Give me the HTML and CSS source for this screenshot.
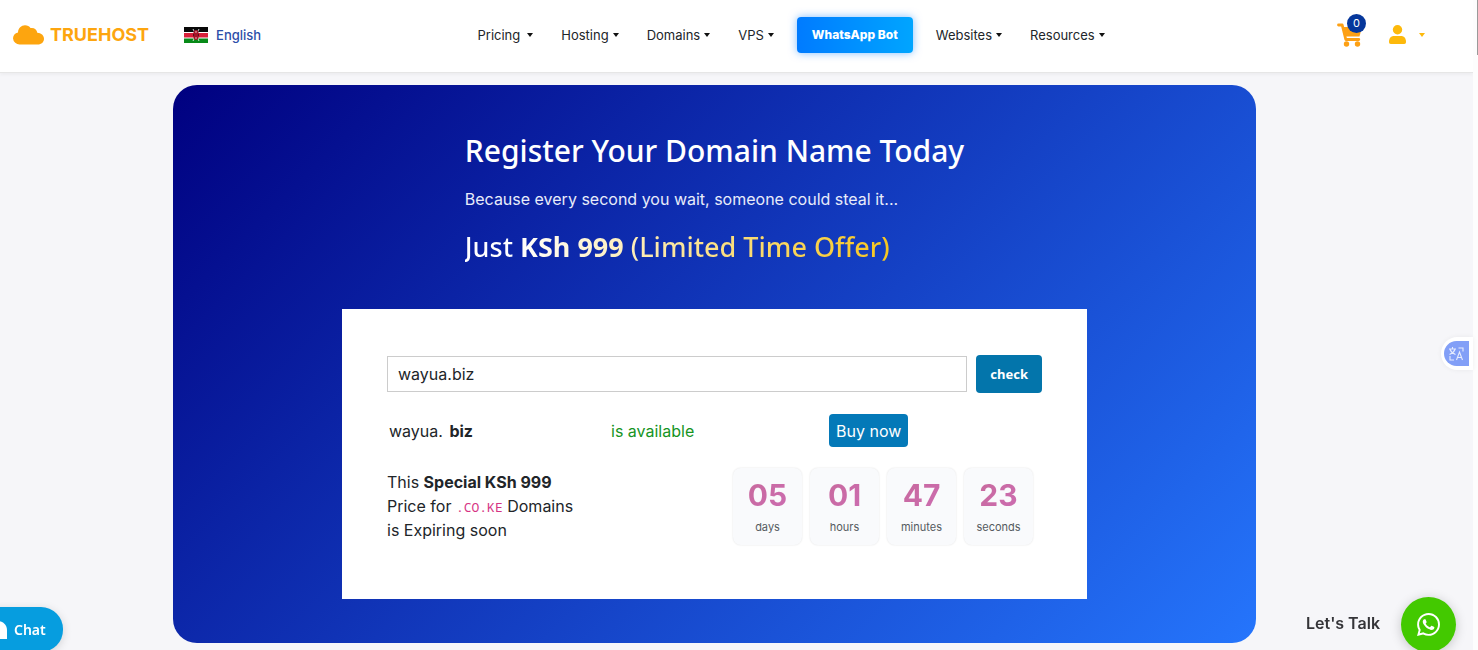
FILE: index.html
```html
<!DOCTYPE html>
<html lang="en">
<head>
<meta charset="utf-8">
<meta name="viewport" content="width=device-width, initial-scale=1">
<title>Truehost – Register Your Domain Name</title>
<link rel="stylesheet" href="styles.css">
</head>
<body>
<div class="page">
  <header class="topbar">
    <div class="brand-group">
      <a class="brand" href="#">
        <svg class="brand-cloud" viewBox="0 0 31 20" aria-hidden="true"><path fill="#fda50f" d="M7 19.5A6.6 6.6 0 0 1 0 13.3 6.4 6.4 0 0 1 5 7.4C5.2 3.200 8.300.3 12 .3c2.500 0 4.300 1 5.500 2.800 3.300-.8 6.200 1.200 6.800 4.600C28.200 8 31 10.300 31 13.700c0 3.400-2.600 5.800-6.300 5.800Z"/></svg>
        <span>TRUEHOST</span>
      </a>
      <a class="language" href="#">
        <svg class="flag" viewBox="0 0 24 16" aria-hidden="true"><path fill="#fff" d="M0 0h24v16H0z"/><path fill="#080808" d="M0 0h24v5H0z"/><path fill="#d8203a" d="M0 6h24v4.500H0z"/><path fill="#078a18" d="M0 11.500h24V16H0z"/><path stroke="#fff" stroke-width=".8" d="m9 2 6 12M15 2 9 14"/><ellipse cx="12" cy="8" rx="2.800" ry="5" fill="#a51427"/><path fill="#111" d="M9.300 6.500Q11 8 9.300 9.500M14.700 6.500Q13 8 14.700 9.500"/><path stroke="#fff" stroke-width=".7" d="M12 4v2m0 4v2"/></svg>
        <span>English</span>
      </a>
    </div>
    <nav class="nav" aria-label="Main">
      <a class="nav-link nav-link-wide" href="#">Pricing</a>
      <a class="nav-link" href="#">Hosting</a>
      <a class="nav-link" href="#">Domains</a>
      <a class="nav-link" href="#">VPS</a>
      <a class="bot-link" href="#">WhatsApp Bot</a>
      <a class="nav-link" href="#">Websites</a>
      <a class="nav-link" href="#">Resources</a>
    </nav>
    <div class="account">
      <a class="cart" href="#" aria-label="Cart, 0 items">
        <svg viewBox="0 0 25 24" aria-hidden="true"><path fill="none" stroke="#fda014" stroke-width="2.800" stroke-linecap="round" stroke-linejoin="round" d="M1.500 2h3.700l3.600 14.500h13"/><path fill="#fda014" d="M5 4h20l-2.500 9.500H7.500z"/><circle cx="9.500" cy="21" r="2.700" fill="#fda014"/><circle cx="20.500" cy="21" r="2.700" fill="#fda014"/></svg>
        <span class="cart-count">0</span>
      </a>
      <button class="user" type="button" aria-label="Account">
        <svg viewBox="0 0 17 19" aria-hidden="true"><g fill="#fdb90b"><circle cx="8.500" cy="4.700" r="4.700"/><path d="M0 17c0-4 2-6 5-6h7c3 0 5 2 5 6 0 1.300-.6 2-1.800 2H1.800C.6 19 0 18.300 0 17Z"/></g></svg>
      </button>
    </div>
  </header>

  <main class="content">
    <section class="hero">
      <div class="hero-copy">
        <h1>Register Your Domain Name Today</h1>
        <p>Because every second you wait, someone could steal it...</p>
        <h2>Just <strong>KSh 999</strong> (Limited Time Offer)</h2>
      </div>
      <div class="card">
        <form class="search">
          <input type="text" value="wayua.biz" aria-label="Domain name">
          <button class="check" type="button">check</button>
        </form>
        <div class="result">
          <div class="domain">wayua. <strong>biz</strong></div>
          <div class="status">is available</div>
          <div><button class="buy" type="button">Buy now</button></div>
        </div>
        <div class="promo">
          <p>This <strong>Special KSh 999</strong><br>Price for <code>.CO.KE</code> Domains<br>is Expiring soon</p>
          <div class="countdown">
            <div class="unit"><strong>05</strong><span>days</span></div>
            <div class="unit"><strong>01</strong><span>hours</span></div>
            <div class="unit"><strong>47</strong><span>minutes</span></div>
            <div class="unit"><strong>23</strong><span>seconds</span></div>
          </div>
        </div>
      </div>
    </section>
  </main>
</div>
<div class="scroll-track"><div class="scroll-thumb"></div></div>

<button class="chat" type="button">
  <svg viewBox="0 0 16 18" aria-hidden="true"><path fill="#fff" d="M0 0h7c5 0 9 4 9 9v9H9c-5 0-9-4-9-9z"/></svg>
  <span>Chat</span>
</button>
<button class="translate" type="button" aria-label="Translate">
  <svg viewBox="0 0 25 25" aria-hidden="true"><path fill="#829ff7" d="M12.500 0H25v25H12.500a12.500 12.500 0 0 1 0-25Z"/><path fill="none" stroke="#fff" stroke-opacity=".8" stroke-width="1.100" d="M5 8h7M8.500 6v2M6 8.500c1 2.500 3 4 5.500 5M11 8.500c-1 2.500-3 4-5.500 5M14.500 7H19v3.500M6 15v4h4M12.500 19l3-8 3 8M13.500 16.500h4"/></svg>
</button>
<a class="talk" href="#">
  <span class="talk-label">Let's Talk</span>
  <span class="talk-icon"><svg viewBox="0 0 24 24" aria-hidden="true"><path fill="#fff" d="M17.472 14.382c-.297-.149-1.758-.867-2.030-.967-.273-.099-.471-.148-.670.150-.197.297-.767.966-.940 1.164-.173.199-.347.223-.644.075-.297-.150-1.255-.463-2.390-1.475-.883-.788-1.480-1.761-1.653-2.059-.173-.297-.018-.458.130-.606.134-.133.298-.347.446-.520.149-.174.198-.298.298-.497.099-.198.050-.371-.025-.520-.075-.149-.669-1.612-.916-2.207-.242-.579-.487-.500-.669-.510-.173-.008-.371-.010-.570-.010-.198 0-.520.074-.792.372-.272.297-1.040 1.016-1.040 2.479 0 1.462 1.065 2.875 1.213 3.074.149.198 2.096 3.200 5.077 4.487.709.306 1.262.489 1.694.625.712.227 1.360.195 1.871.118.571-.085 1.758-.719 2.006-1.413.248-.694.248-1.289.173-1.413-.074-.124-.272-.198-.570-.347m-5.421 7.403h-.004a9.870 9.870 0 0 1-5.031-1.378l-.361-.214-3.741.982.998-3.648-.235-.374a9.860 9.860 0 0 1-1.510-5.260c.001-5.450 4.436-9.884 9.888-9.884 2.640 0 5.122 1.030 6.988 2.898a9.825 9.825 0 0 1 2.893 6.994c-.003 5.450-4.437 9.884-9.885 9.884m8.413-18.297A11.815 11.815 0 0 0 12.050 0C5.495 0 .160 5.335.157 11.892c0 2.096.547 4.142 1.588 5.945L.057 24l6.305-1.654a11.882 11.882 0 0 0 5.683 1.448h.005c6.554 0 11.890-5.335 11.893-11.893a11.821 11.821 0 0 0-3.480-8.413Z"/></svg></span>
</a>
</body>
</html>
```
FILE: styles.css
```css
* { box-sizing: border-box; }
body {
  margin: 0;
  min-height: 100vh;
  display: flex;
  background: #f6f6f9;
  color: #212529;
  font: 16px/24px Inter, "Liberation Sans", sans-serif;
}
a { color: inherit; text-decoration: none; }
button { border: 0; padding: 0; font: inherit; cursor: pointer; }
svg { display: block; }
h1, h2, p { margin: 0; }

.page { flex: 1; min-width: 0; }
.scroll-track { width: 5px; background: #fdfdfd; display: flex; justify-content: flex-end; }
.scroll-thumb { width: 1px; height: 55px; background: #9a9a9a; }

.topbar {
  min-height: 73px;
  padding: 0 48px 3px 13px;
  display: flex;
  align-items: center;
  justify-content: space-between;
  background: #fff;
  border-bottom: 1px solid #e6e6e6;
  box-shadow: 0 2px 3px rgba(0, 0, 0, 0.04);
}
.brand-group { display: flex; align-items: center; gap: 35px; }
.brand { display: flex; align-items: center; gap: 6px; color: #fda50f; font-size: 18px; font-weight: 700; }
.brand-cloud { width: 31px; height: 20px; }
.language { display: flex; align-items: center; gap: 8px; color: #2b4ea8; font-size: 13px; font-weight: 500; }
.flag { width: 24px; height: 16px; }

.nav { display: flex; align-items: center; gap: 28px; margin-right: 16px; font-size: 13px; }
.nav-link { display: flex; align-items: center; gap: 4px; }
.nav-link-wide { gap: 7px; }
.nav-link::after, .user::after {
  content: "";
  border: 3px solid transparent;
  border-top: 4px solid #111;
  border-bottom: 0;
}
.bot-link {
  margin: 0 -5px;
  padding: 6px 15px;
  border-radius: 4px;
  color: #fff;
  font-size: 12px;
  font-weight: 800;
  background: linear-gradient(90deg, #007bff, #00a5ff);
  box-shadow: 0 0 8px rgba(0, 123, 255, 0.5);
}

.account { display: flex; align-items: center; gap: 27px; }
.cart { position: relative; }
.cart svg { width: 25px; height: 24px; }
.cart-count {
  position: absolute;
  top: -9px;
  right: -4px;
  width: 19px;
  height: 19px;
  border-radius: 50%;
  background: #06379b;
  color: #fff;
  font-size: 11px;
  line-height: 19px;
  text-align: center;
}
.user { display: flex; align-items: center; gap: 13px; background: none; }
.user svg { width: 17px; height: 19px; }
.user::after { border-top-color: #fdb90b; }

.content { padding: 12px 217px 7px 173px; }
.hero {
  padding: 44px 24px;
  border-radius: 24px;
  background: linear-gradient(135deg, #000080, #2575fc);
}
.hero-copy { width: fit-content; margin: 0 auto; color: #fff; }
.hero h1, .hero h2 { font-family: "Noto Sans", "Open Sans", sans-serif; font-weight: 500; }
.hero h1 { font-size: 30px; line-height: 44px; }
.hero-copy p { margin-top: 14px; color: #e8ecfa; }
.hero h2 {
  width: fit-content;
  margin-top: 16px;
  font-size: 27px;
  line-height: 40px;
  color: transparent;
  background: linear-gradient(90deg, #fff, #fff 12%, #f7c61e);
  background-clip: text;
  -webkit-background-clip: text;
}

.card { max-width: 745px; margin: 42px auto 0; padding: 46px 45px 54px; background: #fff; }
.search { display: flex; align-items: center; gap: 9px; }
.search input {
  flex: 1;
  min-width: 0;
  height: 36px;
  padding: 0 10px;
  border: 1px solid #ccc;
  color: #212529;
  background: #fff;
  font: inherit;
}
.check {
  height: 38px;
  padding: 0 14px;
  border-radius: 4px;
  background: #0375ab;
  color: #fff;
  font: 700 13px "Noto Sans", sans-serif;
}
.result {
  display: grid;
  grid-template-columns: 222px 218px 1fr;
  align-items: center;
  margin-top: 21px;
  padding-left: 2px;
}
.domain strong { margin-left: 2px; }
.status { color: #16941f; }
.buy { height: 33px; padding: 0 7px; border-radius: 4px; background: #0479b8; color: #fff; }
.promo { display: flex; justify-content: space-between; margin-top: 21px; padding-right: 9px; }
.promo p { padding-top: 2px; }
.promo strong { font-weight: 700; }
.promo code { color: #d63384; font: 13px "Noto Sans Mono", "DejaVu Sans Mono", monospace; }
.countdown { display: flex; gap: 8px; }
.unit {
  width: 69px;
  height: 77px;
  padding-top: 8px;
  display: flex;
  flex-direction: column;
  align-items: center;
  border-radius: 8px;
  background: #f9fafc;
  box-shadow: 0 0 2px rgba(0, 0, 0, 0.12);
  color: #555a60;
  font-size: 11px;
}
.unit strong {
  font-size: 30px;
  line-height: 39px;
  color: transparent;
  background: linear-gradient(135deg, #c86a9c, #cc6cb2);
  background-clip: text;
  -webkit-background-clip: text;
}

.chat {
  position: fixed;
  left: -9px;
  bottom: -2px;
  height: 45px;
  padding: 0 17px 0 0;
  display: flex;
  align-items: center;
  gap: 7px;
  border-radius: 0 22px 22px 0;
  background: #069ddf;
  color: #fff;
  font: 600 14px "Noto Sans", sans-serif;
  box-shadow: 0 2px 10px rgba(0, 0, 0, 0.15);
}
.chat svg { width: 16px; height: 18px; }
.translate {
  position: fixed;
  right: 5px;
  top: 337px;
  padding: 4px 4px 4px 3px;
  border-radius: 17px 0 0 17px;
  background: #fff;
  box-shadow: 0 0 5px rgba(0, 0, 0, 0.06);
}
.translate svg { width: 25px; height: 25px; }
.talk {
  position: fixed;
  right: 22px;
  bottom: -2px;
  display: flex;
  align-items: center;
  gap: 21px;
  color: #343438;
  font-size: 16px;
  font-weight: 600;
}
.talk-label { padding-bottom: 3px; }
.talk-icon {
  width: 55px;
  height: 55px;
  display: grid;
  place-items: center;
  border-radius: 50%;
  background: #43c900;
  box-shadow: 0 2px 12px rgba(0, 0, 0, 0.2);
}
.talk-icon svg { width: 23px; height: 23px; }
```
